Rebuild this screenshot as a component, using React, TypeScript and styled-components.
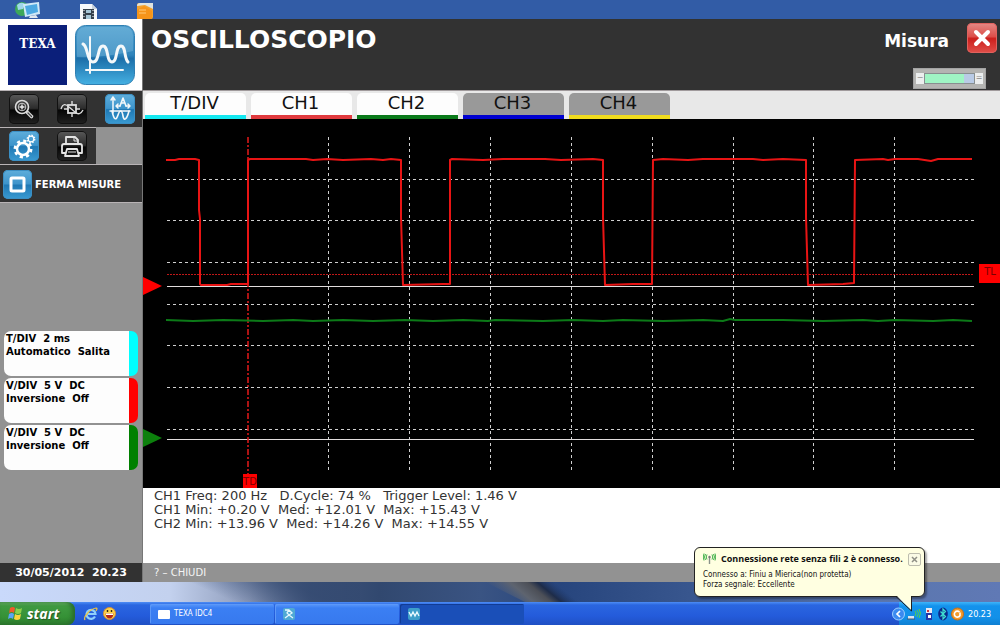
import React from "react";
import styled, { createGlobalStyle, css } from "styled-components";

const GlobalStyle = createGlobalStyle`
  *, *::before, *::after { box-sizing: border-box; }
  body { margin: 0; background: #325ca6; font-family: "DejaVu Sans", Verdana, sans-serif; }
  button { font: inherit; border: 0; padding: 0; margin: 0; cursor: pointer; }
  h1, h2, p { margin: 0; }
  svg { display: block; flex: none; }
`;

const Desktop = styled.div`
  min-height: 100vh;
  display: flex;
  flex-direction: column;
`;

const DesktopStrip = styled.div`
  height: 19px;
  padding: 1px 0 0 14px;
  display: flex;
  gap: 40px;
  background: #325ca6;
  overflow: hidden;
`;

const AppWindow = styled.div`
  flex: 1;
  display: flex;
  background: #929292;
`;

const Sidebar = styled.aside`
  width: 142px;
  flex: none;
  display: flex;
  flex-direction: column;
  background: #929292;
`;

const Brand = styled.div`
  height: 71px;
  padding: 6px 7px 0 8px;
  display: flex;
  justify-content: space-between;
  background: #fff;
`;

const TexaLogo = styled.div`
  width: 59px;
  height: 60px;
  padding-top: 11px;
  background: #0b1f7a;
  color: #fff;
  text-align: center;
  font: bold 12px/16px "DejaVu Serif", serif;
`;

const ToolRow = styled.div<{ $short?: boolean }>`
  height: 37px;
  width: ${(p) => (p.$short ? "96px" : "auto")};
  padding: 0 9px;
  display: flex;
  align-items: center;
  gap: 18px;
  background: #323232;
  border-top: 1px solid #b9b4b6;
`;

const StopRow = styled.div`
  height: 39px;
  padding: 1px 3px 0;
  display: flex;
  align-items: center;
  background: #323232;
  border-top: 1px solid #b9b4b6;
  border-bottom: 1px solid #b9b4b6;
`;

const blueFace = css`
  background: linear-gradient(#5faedb 0%, #3d94cb 48%, #1f78b4 52%, #3a9bd2 100%);
  box-shadow: inset 0 0 0 1px #3b8fc4;
`;
const blackFace = css`
  background: linear-gradient(#5a5a5a 0%, #2c2c2c 48%, #060606 54%, #222 100%);
  box-shadow: inset 0 0 0 1px #111;
`;

const IconButton = styled.button<{ $tone: "blue" | "black" }>`
  width: 30px;
  height: 30px;
  flex: none;
  border-radius: 5px;
  ${(p) => (p.$tone === "blue" ? blueFace : blackFace)}
`;

const StopButton = styled.button`
  display: flex;
  align-items: center;
  gap: 3px;
  background: none;
  color: #fff;
  font-size: 10px;
  font-weight: bold;
  white-space: nowrap;
`;

const StopFace = styled.span`
  width: 29px;
  height: 29px;
  border-radius: 5px;
  ${blueFace}
`;

const Cards = styled.div`
  margin: 128px 4px 0;
  display: flex;
  flex-direction: column;
  gap: 2px;
`;

const Card = styled.button<{ $color: string }>`
  height: 45px;
  padding: 1px 2px 0;
  border-radius: 7px;
  background: linear-gradient(to left, ${(p) => p.$color} 9px, #fdfdfd 9px);
  color: #000;
  text-align: left;
  white-space: pre;
  font-size: 10px;
  font-weight: bold;
  line-height: 13px;
  display: flex;
  flex-direction: column;
`;

const Clock = styled.div`
  height: 19px;
  margin-top: auto;
  background: #323232;
  color: #fff;
  font-size: 11px;
  font-weight: bold;
  line-height: 20px;
  text-align: center;
  white-space: pre;
`;

const Main = styled.main`
  flex: 1;
  min-width: 0;
  display: flex;
  flex-direction: column;
  border-left: 1px solid #777;
`;

const Header = styled.header`
  height: 71px;
  padding: 3px 3px 0 8px;
  display: flex;
  justify-content: space-between;
  background: #323232;
  color: #fff;
`;

const Title = styled.h1`
  font-size: 25px;
  line-height: 36px;
`;

const HeaderSide = styled.div`
  display: flex;
  flex-direction: column;
  align-items: flex-end;
  gap: 8px;
`;

const HeaderTop = styled.div`
  display: flex;
  align-items: flex-start;
  gap: 18px;
`;

const Mode = styled.h2`
  font-size: 17px;
  line-height: 38px;
`;

const CloseButton = styled.button`
  width: 30px;
  height: 30px;
  margin-top: 1px;
  border-radius: 5px;
  background: linear-gradient(#e58a86 0%, #dc4f4a 45%, #cc1f1c 52%, #e0504a 100%);
  box-shadow: inset 0 0 0 1px #e0625e;
`;

const Gauge = styled.div`
  width: 73px;
  height: 21px;
  margin-right: 11px;
  padding: 4px 2px;
  display: flex;
  background: #b4b4b2;
  border: 1px solid #a3a3a3;
`;

const GaugeCap = styled.span`
  width: 8px;
  background: #eceeee;
  color: #888;
  font-size: 8px;
  line-height: 10px;
  text-align: center;
`;

const GaugeTrack = styled.span`
  flex: 1;
  border: 1px solid #888f90;
  background: linear-gradient(to right, #9ff5c4 80%, #b9cbe6 80%);
`;

const Tabs = styled.nav`
  height: 29px;
  padding: 2px 2px 0;
  display: flex;
  gap: 5px;
  background: #e8e8e8;
  border-top: 1px solid #a09a9c;
`;

const Tab = styled.button<{ $color: string; $off?: boolean }>`
  width: 101px;
  border-radius: 5px 5px 0 0;
  border-bottom: 4px solid ${(p) => p.$color};
  background: ${(p) => (p.$off ? "#999" : "#fdfdfd")};
  color: #111;
  font-size: 18px;
  line-height: 18px;
  padding: 0 2px 3px 0;
`;

const Scope = styled.div`
  background: #000;
  svg { width: 100%; height: auto; }
`;

const Readout = styled.div`
  flex: 1;
  padding: 1px 11px;
  background: #fff;
  color: #333;
  font-size: 13px;
  line-height: 14px;
  white-space: pre;
`;

const Footer = styled.footer`
  height: 19px;
  padding-left: 11px;
  display: flex;
  align-items: center;
  background: #929292;
`;

const FooterButton = styled.button`
  background: none;
  color: #f4f4f4;
  font-size: 10px;
  line-height: 18px;
`;

const Wallpaper = styled.div`
  height: 20px;
  background: #3c5a90;
  svg { width: 100%; height: 20px; }
`;

const Taskbar = styled.div`
  height: 23px;
  display: flex;
  background: linear-gradient(#4d8df5 0, #2a66e0 3px, #245bdb 14px, #1f50c4 100%);
`;

const StartButton = styled.button`
  width: 75px;
  display: flex;
  align-items: center;
  gap: 4px;
  padding-left: 8px;
  border-radius: 0 8px 8px 0;
  background: linear-gradient(#6bb56b 0, #3f9a41 4px, #359136 15px, #2b7a2c 100%);
  box-shadow: inset -3px 0 4px #2a6c2c;
  color: #fff;
  font: italic bold 14px/20px "Open Sans", "Noto Sans", sans-serif;
  text-shadow: 1px 1px 1px #245324;
`;

const QuickLaunch = styled.div`
  width: 75px;
  display: flex;
  align-items: center;
  gap: 5px;
  padding-left: 9px;
`;

const Tasks = styled.div`
  flex: 1;
  display: flex;
  gap: 1px;
  padding-top: 2px;
`;

const Task = styled.button<{ $active?: boolean }>`
  width: 124px;
  height: 20px;
  padding-left: 8px;
  display: flex;
  align-items: center;
  gap: 4px;
  border-radius: 2px;
  background: ${(p) =>
    p.$active ? "#1a4fb8" : "linear-gradient(#5a98fb, #3b7ff3 4px, #3779ee)"};
  box-shadow: inset 1px 1px 0 ${(p) => (p.$active ? "#123c94" : "#5c98f8")};
  color: #fff;
  font: 8px/18px "DejaVu Sans Condensed", Tahoma, sans-serif;
`;

const Tray = styled.div`
  position: relative;
  width: 101px;
  display: flex;
  align-items: center;
  background: linear-gradient(#3fb4f8 0, #1392ec 4px, #1290e8 16px, #0f7fd2 100%);
  color: #fff;
  font: 9px/20px "DejaVu Sans Condensed", Tahoma, sans-serif;
`;

const TrayIcons = styled.div`
  display: flex;
  align-items: center;
  gap: 2px;
  margin: 0 4px 0 -7px;
`;

const Balloon = styled.div`
  position: absolute;
  right: 75px;
  bottom: 28px;
  width: 231px;
  height: 50px;
  padding: 4px 4px 0 8px;
  border: 1px solid #222;
  border-radius: 6px;
  background: #ffffe1;
  box-shadow: 2px 2px 2px rgba(0, 0, 0, 0.35);
  color: #111;
  font: 8px/10px "DejaVu Sans Condensed", Tahoma, sans-serif;
  white-space: nowrap;
`;

const BalloonHead = styled.div`
  display: flex;
  align-items: center;
  gap: 5px;
  height: 14px;
  margin-bottom: 4px;
`;

const BalloonTitle = styled.strong`
  flex: 1;
  font: bold 9px/14px "Open Sans", Tahoma, sans-serif;
`;

const BalloonClose = styled.button`
  width: 13px;
  height: 13px;
  border: 1px solid #bdbdae;
  border-radius: 2px;
  background: #fbfbe6;
`;

const BalloonTail = styled.svg`
  position: absolute;
  right: 9px;
  top: 48px;
`;

const white = { fill: "none", stroke: "#f4f8fa", strokeWidth: 2, strokeLinecap: "round", strokeLinejoin: "round" } as const;

const WaveLogo = () => (
  <svg width="60" height="60" viewBox="0 0 60 60" aria-label="Oscilloscopio">
    <defs>
      <linearGradient id="logoFace" x1="0" y1="0" x2="0" y2="1">
        <stop offset="0" stopColor="#4f9fce" />
        <stop offset="0.5" stopColor="#2f84bb" />
        <stop offset="0.56" stopColor="#1c6fa9" />
        <stop offset="1" stopColor="#45b0e2" />
      </linearGradient>
    </defs>
    <rect x="0.5" y="0.5" width="59" height="59" rx="10" fill="url(#logoFace)" stroke="#2f7fb2" />
    <path d="M2 11Q2 2 11 2H49Q58 2 58 11V26Q30 33 2 32Z" fill="#8cc7e6" opacity="0.35" />
    <path {...white} d="M15 12V48M11 45H48" />
    <path {...white} strokeWidth="3" d="M8 19C13 21 12 37 18 37C25 37 22 21 28 21C34 21 31 37 37 37C43 37 40 21 46 21C51 21 49 34 53 37" />
  </svg>
);

const ZoomIcon = () => (
  <svg width="30" height="30" viewBox="0 0 30 30">
    <circle {...white} stroke="#ddd" strokeWidth="1.6" cx="13" cy="13" r="6.5" />
    <circle fill="none" stroke="#ccc" strokeWidth="1" cx="13" cy="13" r="3.8" />
    <path stroke="#eee" strokeWidth="1.4" d="M10.500 13h5M13 10.500v5" />
    <path stroke="#ddd" strokeWidth="3.600" strokeLinecap="round" d="M18.500 18.500l4 4" />
    <path stroke="#444" strokeWidth="1.200" strokeLinecap="round" d="M19 19l3.500 3.500" />
  </svg>
);

const ProbeIcon = () => (
  <svg width="30" height="30" viewBox="0 0 30 30">
    <rect x="11" y="11" width="8" height="8" fill="none" stroke="#ddd" strokeWidth="1.8" />
    <path fill="none" stroke="#ddd" strokeWidth="1.4" d="M4 15C6 9 9 10 12 13L18 18C21 21 24 20 26 16M15 7v4M15 19v4M7 15h4M19 15h4" />
  </svg>
);

const AxisIcon = () => (
  <svg width="30" height="30" viewBox="0 0 30 30">
    <path {...white} strokeWidth="1.500" d="M8 3V19M5 17H25M6 6l2-3 2 3M12 12h3M21 12h3M13 10l-2 2 2 2M23 10l2 2-2 2" />
    <path {...white} strokeWidth="1.600" d="M15 12l3-8 3 8M16 9h4M7 17C9 26 11 27 13 21S17 16 18 22S22 25 24 17" />
  </svg>
);

const Gear = ({ cx, cy, r }: { cx: number; cy: number; r: number }) => (
  <g>
    <circle cx={cx} cy={cy} r={r} fill="none" stroke="#fff" strokeWidth={r * 0.42} />
    <circle cx={cx} cy={cy} r={r * 1.35} fill="none" stroke="#fff" strokeWidth={r * 0.45} strokeDasharray={`${r * 0.53} ${r * 0.53}`} />
  </g>
);

const GearsIcon = () => (
  <svg width="30" height="30" viewBox="0 0 30 30">
    <Gear cx={14} cy={18} r={6} />
    <Gear cx={22} cy={8} r={2.8} />
  </svg>
);

const PrinterIcon = () => (
  <svg width="30" height="30" viewBox="0 0 30 30">
    <g fill="none" stroke="#e4e4e4" strokeWidth="1.800" strokeLinejoin="round">
      <path d="M9 14V6h9l3 3v5" />
      <path d="M9 22H5V15q0-2 2-2h16q2 0 2 2v7h-4" />
      <path d="M10 18h10l2 7H8z" />
      <path d="M11 21h8M17 6v4h4" strokeWidth="1" />
    </g>
  </svg>
);

const StopIcon = () => (
  <svg width="29" height="29" viewBox="0 0 29 29">
    <rect x="8" y="8" width="13" height="13" rx="1" fill="none" stroke="#fff" strokeWidth="3" />
  </svg>
);

const CrossIcon = () => (
  <svg width="30" height="30" viewBox="0 0 30 30">
    <path d="M9 9l12 12M21 9L9 21" stroke="#fff" strokeWidth="4" strokeLinecap="round" />
  </svg>
);

const NetworkIcon = () => (
  <svg width="26" height="18" viewBox="-1 0 26 18">
    <circle cx="7" cy="8" r="7" fill="#3da85a" />
    <path d="M2 4Q6 0 10 3L8 8 3 9Z" fill="#9fd6ea" />
    <path d="M8 3L24 1L25 13L10 16Z" fill="#cfe9f7" />
    <path d="M10 5L22 3L23 11L12 14Z" fill="#4ba9e2" />
    <path d="M15 15l6-1 2 3h-9z" fill="#dfe7ee" />
  </svg>
);

const VideoFileIcon = () => (
  <svg width="17" height="18" viewBox="0 0 17 18">
    <path d="M0 3H12L17 8V18H0Z" fill="#f7f9fb" />
    <path d="M12 3V8H17Z" fill="#c9d2dc" />
    <path d="M3 8H14V18H3Z" fill="#35414c" />
    <path d="M6 9h5v3H6zM6 14h5v4H6z" fill="#a7c7d8" />
    <path d="M4 9v9M13 9v9" stroke="#fff" strokeDasharray="1 2" />
  </svg>
);

const FolderIcon = () => (
  <svg width="16" height="18" viewBox="0 0 16 18">
    <rect y="2" width="16" height="16" rx="2" fill="#f3a12c" />
    <path d="M0 5Q0 2 3 2H16V8L8 4Z" fill="#dfe3e0" />
    <path d="M0 9L7 5 15 10V18H0Z" fill="#f6941a" />
    <path d="M2 9h7M2 12h7" stroke="#ffc977" />
  </svg>
);

const WindowsFlag = () => (
  <svg width="15" height="15" viewBox="0 0 15 15">
    <path d="M2 2Q5 0 7 2L6 7Q4 5 1 7Z" fill="#f0592b" />
    <path d="M8 2Q11 4 14 2L13 7Q10 9 7 7Z" fill="#8cd04a" />
    <path d="M1 8Q4 6 6 8L5 13Q3 11 0 13Z" fill="#5aa5f5" />
    <path d="M7 8Q10 10 13 8L12 13Q9 15 6 13Z" fill="#fbd33c" />
  </svg>
);

const ExplorerIcon = () => (
  <svg width="14" height="14" viewBox="0 0 14 14">
    <path d="M11 9.500A4.500 4.500 0 1 1 11.500 7H4" fill="none" stroke="#8fd0fb" strokeWidth="2.200" />
    <path d="M1 13C-1 10 6 2 12 1Q14 1 12 4" fill="none" stroke="#f0c540" strokeWidth="1.200" />
  </svg>
);

const SmileyIcon = () => (
  <svg width="13" height="13" viewBox="0 0 13 13">
    <circle cx="6.500" cy="6.500" r="6" fill="#fbd34a" stroke="#d98f35" />
    <path d="M2.500 6.500h8Q10 11.500 6.500 11.500T2.500 6.500Z" fill="#b3251c" />
    <path d="M3 6.500h7v1.500H3z" fill="#fff" />
    <path d="M4.500 3v2M8.500 3v2" stroke="#3a2a12" strokeWidth="1.400" />
  </svg>
);

const WindowIcon = () => (
  <svg width="12" height="9" viewBox="0 0 12 9">
    <rect width="12" height="9" rx="1" fill="#fff" />
  </svg>
);

const UserTaskIcon = () => (
  <svg width="12" height="12" viewBox="0 0 12 12">
    <rect width="12" height="12" rx="2" fill="#4fa9d4" />
    <path d="M2 2h4M6 2L9 5 6 7 4 5ZM2 10L6 7 10 10" stroke="#e6f8ff" strokeWidth="1.300" fill="none" />
  </svg>
);

const WaveTaskIcon = () => (
  <svg width="12" height="12" viewBox="0 0 12 12">
    <rect width="12" height="12" rx="2" fill="#3e9fca" />
    <path d="M1 4L3 8 5 4 7 8 9 4 11 8" stroke="#eafaff" strokeWidth="1.300" fill="none" />
  </svg>
);

const TrayArrow = () => (
  <svg width="13" height="14" viewBox="0 0 13 14">
    <circle cx="6.500" cy="7" r="6" fill="#3b8af0" stroke="#9fd0ff" />
    <path d="M8 4L5 7l3 3" stroke="#fff" strokeWidth="1.700" fill="none" />
  </svg>
);

const WirelessTray = () => (
  <svg width="14" height="14" viewBox="0 0 14 14">
    <path d="M1 9h6v3H1z" fill="#dce6f0" />
    <path d="M0 12h8" stroke="#44566d" />
    <path d="M8 4q2 2 0 5M10 3q3 3 0 7M12 2q3 4 0 9" stroke="#55d34b" fill="none" />
  </svg>
);

const UsbTray = () => (
  <svg width="12" height="14" viewBox="-1 0 12 14">
    <rect x="2" y="4" width="6" height="9" fill="#2436a8" />
    <rect x="2" y="1" width="6" height="5" fill="#e9e9f2" />
    <path d="M3 3h2v2H3z" fill="#d6383d" />
    <path d="M4 8h3v3H4z" fill="#fff" />
  </svg>
);

const BluetoothTray = () => (
  <svg width="12" height="14" viewBox="-1 0 12 14">
    <ellipse cx="5" cy="7" rx="4.800" ry="6.500" fill="#0b2a8c" />
    <path d="M2.500 4.500L7.500 9.500 5 12V2L7.500 4.500 2.500 9.500" fill="none" stroke="#3fe0d0" strokeWidth="1.200" />
  </svg>
);

const ShieldTray = () => (
  <svg width="13" height="14" viewBox="0 0 13 14">
    <circle cx="6.500" cy="7" r="6" fill="#f39a2b" stroke="#c96e16" />
    <path d="M8.500 5A3 3 0 1 0 9 8.500V5.500" fill="none" stroke="#fff" strokeWidth="1.600" />
  </svg>
);

const AntennaIcon = () => (
  <svg width="13" height="12" viewBox="0 0 13 12">
    <path d="M6.500 4V11" stroke="#8a928a" strokeWidth="1.400" />
    <circle cx="6.500" cy="4" r="1.200" fill="#777" />
    <path d="M4 1.500q-1.500 2.500 0 5M2.500 1q-2 3 0 6M1 .5q-1.500 3.500 0 7M9 1.500q1.500 2.500 0 5M10.500 1q2 3 0 6M12 .5q1.500 3.500 0 7" stroke="#43b14b" fill="none" />
  </svg>
);

const WallpaperArt = () => (
  <svg viewBox="0 0 1000 20" preserveAspectRatio="none" aria-hidden="true">
    <defs>
      <linearGradient id="sky" gradientUnits="userSpaceOnUse" x1="0" y1="0" x2="1000" y2="0">
        <stop offset="0" stopColor="#c9d9fb" />
        <stop offset="0.17" stopColor="#c3d1ee" />
        <stop offset="0.25" stopColor="#8b99b8" />
        <stop offset="0.31" stopColor="#41557b" />
        <stop offset="0.38" stopColor="#31486f" />
        <stop offset="0.48" stopColor="#3a5483" />
        <stop offset="0.56" stopColor="#27457d" />
        <stop offset="0.72" stopColor="#3c5a92" />
        <stop offset="0.88" stopColor="#5a76ae" />
        <stop offset="1" stopColor="#6079b5" />
      </linearGradient>
      <linearGradient id="shade" gradientUnits="userSpaceOnUse" x1="225" y1="16" x2="241" y2="-20">
        <stop offset="0" stopColor="#344a71" stopOpacity="0" />
        <stop offset="1" stopColor="#344a71" stopOpacity="0.8" />
      </linearGradient>
      <linearGradient id="ridge" gradientUnits="userSpaceOnUse" x1="524" y1="32" x2="552" y2="-2">
        <stop offset="0" stopColor="#5d6678" stopOpacity="0" />
        <stop offset="0.35" stopColor="#5e646f" />
        <stop offset="0.6" stopColor="#4c4f57" />
        <stop offset="0.75" stopColor="#1e2c49" />
        <stop offset="1" stopColor="#1e386b" stopOpacity="0" />
      </linearGradient>
    </defs>
    <rect width="1000" height="20" fill="url(#sky)" />
    <path d="M180 0H360V20H180Z" fill="url(#shade)" />
    <path d="M485 0H565L620 20H525Z" fill="url(#ridge)" />
  </svg>
);

const rows = [60, 101, 143, 185, 226, 268, 310];
const columns = [186, 267, 348, 429, 510, 591, 671, 752];

const ScopeScreen = () => (
  <svg viewBox="0 0 857 369" role="img" aria-label="Forme d'onda CH1 e CH2">
    <g stroke="#cfcfcf" strokeDasharray="3 3" fill="none">
      {rows.map((y) => (
        <path key={y} d={`M24 ${y + 0.5}H832`} />
      ))}
      {columns.map((x) => (
        <path key={x} d={`M${x - 0.5} 18V352`} />
      ))}
    </g>
    <path d="M24 167.500H831M24 320.500H831" stroke="#e0dcdc" />
    <path d="M24 155.500H831" stroke="#c01818" strokeDasharray="2 1" />
    <path d="M105 18V355" stroke="#d81818" strokeWidth="1.600" strokeDasharray="6 2 2 2" />
    <path
      fill="none"
      stroke="#e81414"
      strokeWidth="2"
      strokeLinejoin="round"
      d="M23 41L32 41L36 40L52 40L56 41V91L57 100V165L58 166H84L88 165L105 165V41L107 40H163L170 41L184 40L200 41L228 40L240 41L248 40L258 41V98L260 166L300 165H307V41L309 40L340 41L360 40L402 40L418 41L450 40L460 41V98L462 166L490 165L509 165L510 41L520 40L545 41L560 40L610 40L620 41L640 40L663 41V98L665 166L700 165L711 164L712 41L740 40L745 41L752 40L775 40L788 42L795 40L829 40"
    />
    <path
      fill="none"
      stroke="#0c7a18"
      strokeWidth="2"
      d="M23 201L50 202L80 201L120 202L150 201L170 202L200 201L230 202L262 201L290 202L320 201L345 202L352 201L400 202L430 201L460 202L480 201L520 202L560 201L580 202L587 200L592 201L640 201L680 202L720 201L735 202L752 201L790 202L810 201L829 202"
    />
    <path d="M0 158L19 167L0 176Z" fill="#f00" />
    <path d="M0 310L19 319L0 328Z" fill="#0c800c" />
    <rect x="100" y="355" width="14" height="14" fill="#f00" />
    <text x="107" y="366" fontSize="10" textAnchor="middle" fill="#7a0000">TD</text>
    <rect x="836" y="145" width="21" height="19" fill="#f00" />
    <text x="847" y="156" fontSize="10" textAnchor="middle" fill="#7a0000">TL</text>
  </svg>
);

export default function App() {
  return (
    <Desktop>
      <GlobalStyle />
      <DesktopStrip>
        <NetworkIcon />
        <VideoFileIcon />
        <FolderIcon />
      </DesktopStrip>
      <AppWindow>
        <Sidebar>
          <Brand>
            <TexaLogo>TEXA</TexaLogo>
            <WaveLogo />
          </Brand>
          <ToolRow>
            <IconButton $tone="black" aria-label="Zoom"><ZoomIcon /></IconButton>
            <IconButton $tone="black" aria-label="Sonda"><ProbeIcon /></IconButton>
            <IconButton $tone="blue" aria-label="Assi"><AxisIcon /></IconButton>
          </ToolRow>
          <ToolRow $short>
            <IconButton $tone="blue" aria-label="Impostazioni"><GearsIcon /></IconButton>
            <IconButton $tone="black" aria-label="Stampa"><PrinterIcon /></IconButton>
          </ToolRow>
          <StopRow>
            <StopButton>
              <StopFace><StopIcon /></StopFace>
              FERMA MISURE
            </StopButton>
          </StopRow>
          <Cards>
            <Card $color="#00ffff"><span>T/DIV  2 ms</span><span>Automatico  Salita</span></Card>
            <Card $color="#ff0000"><span>V/DIV  5 V  DC</span><span>Inversione  Off</span></Card>
            <Card $color="#008000"><span>V/DIV  5 V  DC</span><span>Inversione  Off</span></Card>
          </Cards>
          <Clock>30/05/2012  20.23</Clock>
        </Sidebar>
        <Main>
          <Header>
            <Title>OSCILLOSCOPIO</Title>
            <HeaderSide>
              <HeaderTop>
                <Mode>Misura</Mode>
                <CloseButton aria-label="Chiudi"><CrossIcon /></CloseButton>
              </HeaderTop>
              <Gauge>
                <GaugeCap>−</GaugeCap>
                <GaugeTrack />
                <GaugeCap>=</GaugeCap>
              </Gauge>
            </HeaderSide>
          </Header>
          <Tabs>
            <Tab $color="#14e8f0">T/DIV</Tab>
            <Tab $color="#e03a3e">CH1</Tab>
            <Tab $color="#0a7a1a">CH2</Tab>
            <Tab $color="#0000d0" $off>CH3</Tab>
            <Tab $color="#f0dc1e" $off>CH4</Tab>
          </Tabs>
          <Scope><ScopeScreen /></Scope>
          <Readout>
            <p>CH1 Freq: 200 Hz   D.Cycle: 74 %   Trigger Level: 1.46 V</p>
            <p>CH1 Min: +0.20 V  Med: +12.01 V  Max: +15.43 V</p>
            <p>CH2 Min: +13.96 V  Med: +14.26 V  Max: +14.55 V</p>
          </Readout>
          <Footer><FooterButton>? – CHIUDI</FooterButton></Footer>
        </Main>
      </AppWindow>
      <Wallpaper><WallpaperArt /></Wallpaper>
      <Taskbar>
        <StartButton><WindowsFlag />start</StartButton>
        <QuickLaunch><ExplorerIcon /><SmileyIcon /></QuickLaunch>
        <Tasks>
          <Task><WindowIcon />TEXA IDC4</Task>
          <Task aria-label="Utente"><UserTaskIcon /></Task>
          <Task $active aria-label="Oscilloscopio"><WaveTaskIcon /></Task>
        </Tasks>
        <Tray>
          <TrayIcons>
            <TrayArrow /><WirelessTray /><UsbTray /><BluetoothTray /><ShieldTray />
          </TrayIcons>
          20.23
          <Balloon role="status">
            <BalloonHead>
              <AntennaIcon />
              <BalloonTitle>Connessione rete senza fili 2 è connesso.</BalloonTitle>
              <BalloonClose aria-label="Chiudi avviso">
                <svg width="11" height="11" viewBox="0 0 11 11">
                  <path d="M3 3l5 5M8 3L3 8" stroke="#8f8f86" strokeWidth="1.500" />
                </svg>
              </BalloonClose>
            </BalloonHead>
            <p>Connesso a: Finiu a Mierica(non protetta)</p>
            <p>Forza segnale: Eccellente</p>
            <BalloonTail width="20" height="16" viewBox="0 0 20 16">
              <path d="M2 0L16 14V0Z" fill="#ffffe1" />
              <path d="M1 0.500L16.500 15V0" fill="none" stroke="#222" />
            </BalloonTail>
          </Balloon>
        </Tray>
      </Taskbar>
    </Desktop>
  );
}
